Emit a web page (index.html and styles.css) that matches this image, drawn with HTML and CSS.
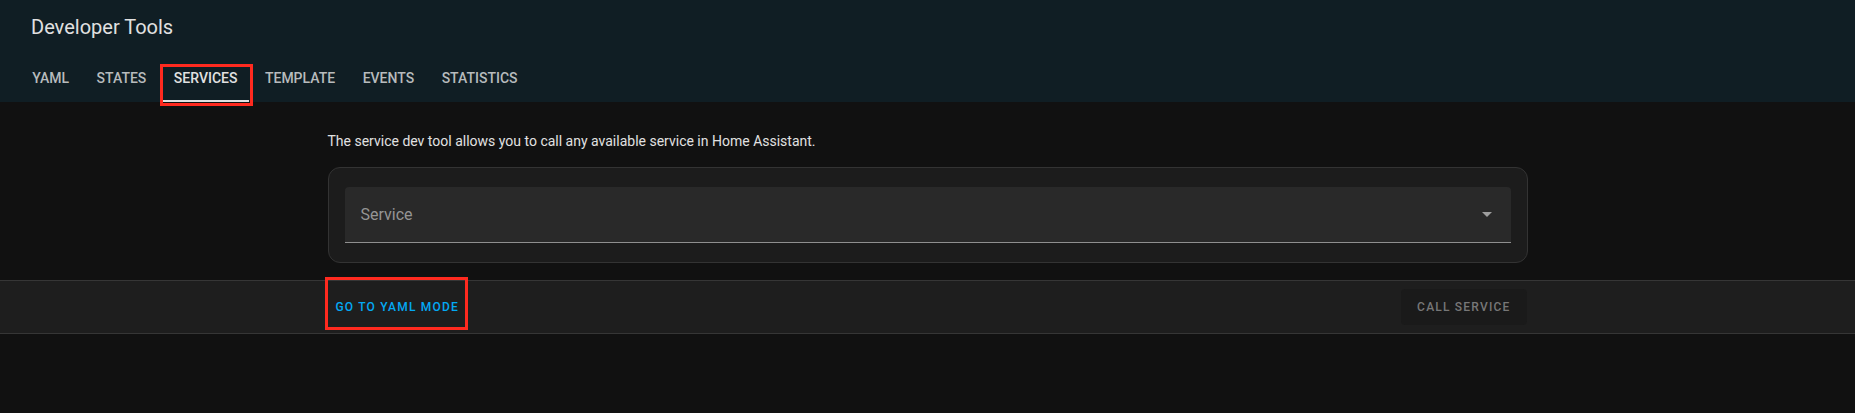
FILE: index.html
```html
<!DOCTYPE html>
<html lang="en">
<head>
  <meta charset="UTF-8" />
  <meta name="viewport" content="width=device-width, initial-scale=1.0" />
  <title>Developer Tools</title>
  <link rel="stylesheet" href="styles.css">
</head>
<body>
  <header class="app-header">
    <div class="toolbar">
      <div class="main-title">Developer Tools</div>
    </div>
    <nav class="tabs">
      <div class="tab">YAML</div>
      <div class="tab">States</div>
      <div class="tab active marked">Services</div>
      <div class="tab">Template</div>
      <div class="tab">Events</div>
      <div class="tab">Statistics</div>
    </nav>
  </header>

  <main class="content">
    <p class="description">The service dev tool allows you to call any available service in Home Assistant.</p>
    <div class="card">
      <div class="select">
        <span class="select-label">Service</span>
        <svg class="dropdown-icon" viewBox="7 10 10 5" width="10" height="5">
          <polygon points="7,10 12,15 17,10" />
        </svg>
      </div>
    </div>
  </main>

  <div class="button-row">
    <div class="button-row-inner">
      <button class="text-btn marked-btn">Go to YAML mode</button>
      <button class="raised-btn" disabled>Call service</button>
    </div>
  </div>
</body>
</html>
```

FILE: styles.css
```css
body {
  font-family: Roboto, "Noto Sans", sans-serif;
  background: #111111;
  color: #e1e1e1;
  margin: 0;
  min-height: 413px;
}
.app-header {
  background: #101e24;
  height: 102px;
}
.toolbar {
  height: 54px;
  display: flex;
  align-items: center;
  padding-left: 31px;
}
.main-title {
  font-size: 20px;
  font-weight: 400;
  color: #e1e1e1;
}
.tabs {
  display: flex;
  height: 48px;
  padding-left: 18.5px;
}
.tab {
  position: relative;
  display: flex;
  align-items: center;
  padding: 0 13.75px;
  font-size: 14px;
  font-weight: 500;
  text-transform: uppercase;
  color: #b7bbbd;
}
.tab.active {
  color: #e1e1e1;
}
.tab.active::before {
  content: "";
  position: absolute;
  left: 3px;
  right: 2px;
  bottom: 0;
  height: 2px;
  background: #e1e1e1;
}
.tab.marked::after {
  content: "";
  position: absolute;
  top: 10px;
  bottom: -4px;
  left: 0;
  right: -2px;
  border: 3px solid #ff2a1f;
}
.content {
  max-width: 1200px;
  margin: 0 auto;
  padding-top: 29px;
}
.description {
  margin: 0 0 16px;
  font-size: 14px;
  line-height: 20px;
  color: #e1e1e1;
}
.card {
  background: #1c1c1c;
  border: 1px solid #333333;
  border-radius: 12px;
  padding: 19px 16px;
}
.select {
  display: flex;
  align-items: center;
  justify-content: space-between;
  height: 55px;
  padding: 0 19px 0 16px;
  background: #292929;
  border-radius: 4px 4px 0 0;
  border-bottom: 1px solid #8f8f8f;
}
.select-label {
  font-size: 16px;
  color: #959595;
}
.dropdown-icon {
  fill: #9e9e9e;
}
.button-row {
  margin-top: 17px;
  background: #1e1e1e;
  border-top: 1px solid #363636;
  border-bottom: 1px solid #363636;
}
.button-row-inner {
  max-width: 1200px;
  margin: 0 auto;
  padding: 8px 0;
  display: flex;
  justify-content: space-between;
}
.text-btn,
.raised-btn {
  height: 36px;
  font-family: Roboto, "Noto Sans", sans-serif;
  font-size: 12px;
  font-weight: 500;
  letter-spacing: 1.2px;
  text-transform: uppercase;
  border: none;
  border-radius: 4px;
  cursor: pointer;
}
.text-btn {
  background: none;
  color: #03a9f4;
  padding: 0 8px;
}
.marked-btn {
  position: relative;
}
.marked-btn::after {
  content: "";
  position: absolute;
  top: -12px;
  bottom: -5px;
  left: -3px;
  right: -1px;
  border: 3px solid #ff2a1f;
}
.raised-btn {
  background: #1a1a1a;
  color: #777777;
  padding: 0 16px;
  margin-right: 1px;
  cursor: default;
}
```
